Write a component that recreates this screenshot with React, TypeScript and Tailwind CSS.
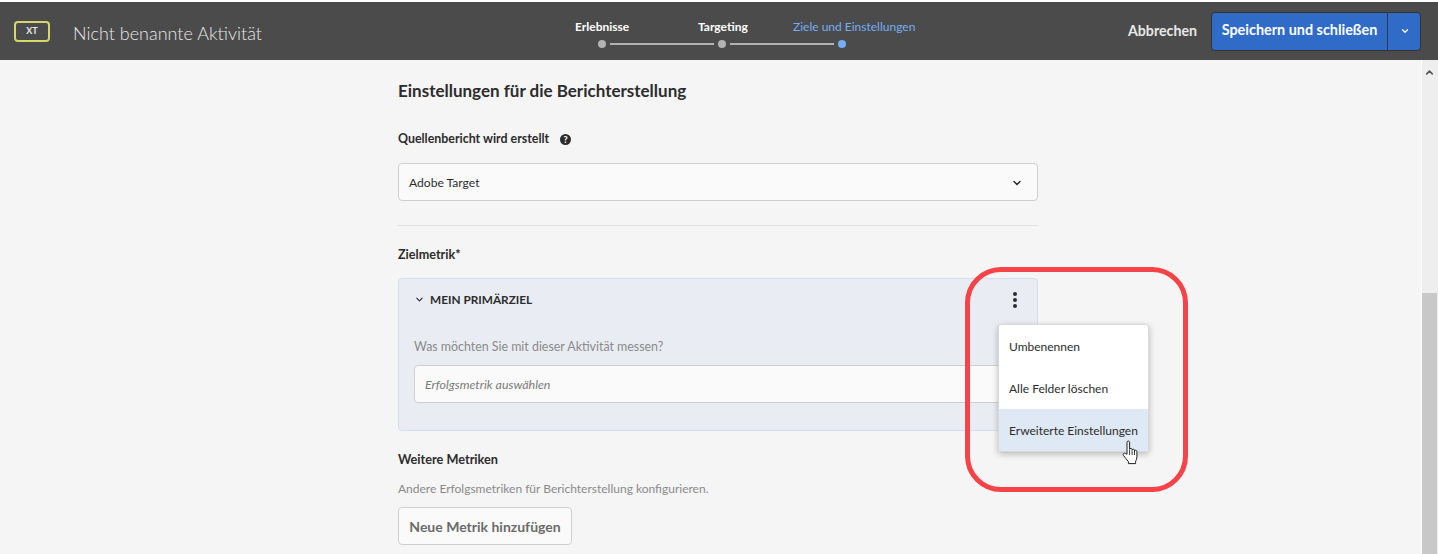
import { ChevronDown, ChevronUp } from "lucide-react";

const font = "font-['Lato','Noto_Sans',sans-serif]";

function Cursor() {
  return (
    <svg width="20" height="26" viewBox="0 0 20 26" className="absolute left-[1121px] top-[440px]">
      <path
        d="M6 2.2c0-1.6 2.6-1.6 2.6 0v7.2c0-1.3 2.5-1.3 2.5 0v.8c0-1.2 2.4-1.2 2.4 0v.9c0-1.1 2.4-1.1 2.4.2v5.5c0 2-.6 3.2-1.3 4.6v2.2H7.4v-2c-1.6-1.8-3.2-3.8-5-6.3-1-1.5 1-2.8 2.1-1.6L6 14.2z"
        fill="#fff"
        stroke="#222"
        strokeWidth="1"
        strokeLinejoin="round"
      />
      <path d="M8.6 10v5M11.1 10.5v4.5M13.5 11v4" stroke="#222" strokeWidth="0.9" fill="none" />
    </svg>
  );
}

export default function App() {
  return (
    <div className={`relative h-[554px] w-[1438px] overflow-hidden bg-[#f5f5f5] ${font}`}>
      {/* Top bar */}
      <div className="h-[2px] bg-white"></div>
      <header className="flex h-[58px] items-center bg-[#4b4b4b] pl-[14px] pr-[17px]">
        <div className="flex h-[21px] w-[36px] items-center justify-center rounded-[4px] border-2 border-[#d3d86c] text-[9px] font-bold text-[#e8e8e8]">
          XT
        </div>
        <div className="ml-[23px] w-[502px] pt-[4px] text-[18px] font-light text-[#e8e8e8]">Nicht benannte Aktivität</div>

        {/* Stepper */}
        <div className="flex w-[342px] flex-col gap-[5px] pt-[3px]">
          <div className="flex text-[12px] font-bold leading-[17px] text-white">
            <span className="w-[54px] whitespace-nowrap">Erlebnisse</span>
            <span className="ml-[69px] w-[49px] whitespace-nowrap">Targeting</span>
            <span className="ml-[46px] whitespace-nowrap font-normal text-[#75aef5]">Ziele und Einstellungen</span>
          </div>
          <div className="ml-[23px] flex items-center">
            <span className="h-[8px] w-[8px] rounded-full bg-[#b3b3b3]"></span>
            <span className="ml-[4px] h-[2px] w-[104px] bg-[#b3b3b3]"></span>
            <span className="ml-[4px] h-[8px] w-[8px] rounded-full bg-[#b3b3b3]"></span>
            <span className="ml-[4px] h-[2px] w-[104px] bg-[#b3b3b3]"></span>
            <span className="ml-[4px] h-[8px] w-[8px] rounded-full bg-[#75aef5]"></span>
          </div>
        </div>

        <div className="ml-auto flex items-center">
          <span className="mr-[14px] text-[14.2px] font-bold text-[#e8e8e8]">Abbrechen</span>
          <div className="flex h-[39px] w-[210px] rounded-[4px] border border-[#333] bg-[#2f6bc7] text-white">
            <div className="flex flex-1 items-center justify-center pb-[2px] text-[14.4px] font-bold">Speichern und schließen</div>
            <div className="flex w-[33px] items-center justify-center border-l border-[#2a3a55] pl-[1px]">
              <ChevronDown size={10} strokeWidth={3} />
            </div>
          </div>
        </div>
      </header>

      <div className="flex h-[494px]">
        {/* Form column */}
        <main className="ml-[398px] w-[640px] text-[#2c2c2c]">
          <h2 className="mt-[20px] text-[17px] font-bold leading-[22px]">Einstellungen für die Berichterstellung</h2>

          <div className="mt-[28px] flex h-[18px] items-center text-[12.4px] font-bold">
            Quellenbericht wird erstellt
            <span className="ml-[11px] flex h-[11px] w-[11px] items-center justify-center rounded-full bg-[#2c2c2c] text-[9px] font-black leading-none text-white">
              ?
            </span>
          </div>
          <div className="mt-[15px] flex h-[38px] items-center justify-between rounded-[4px] border border-[#d0d0d0] bg-[#fafafa] pl-[10px] pr-[14px] pt-[2px] text-[12.1px]">
            Adobe Target
            <ChevronDown size={12} strokeWidth={3} />
          </div>

          <div className="mt-[24px] h-px bg-[#e1e1e1]"></div>

          <div className="mt-[20px] h-[18px] text-[12.6px] font-bold leading-[18px]">Zielmetrik*</div>

          {/* Goal panel */}
          <section className="mt-[14px] h-[153px] rounded-[4px] border border-[#d3dfee] bg-[#e9edf3] px-[15px]">
            <div className="flex h-[41px] items-center justify-between">
              <div className="flex items-center gap-[5px] text-[11.8px] font-bold">
                <ChevronDown size={11} strokeWidth={2.5} />
                MEIN PRIMÄRZIEL
              </div>
              <div className="mr-[5px] flex flex-col gap-[2px]">
                <span className="h-[4px] w-[4px] rounded-full bg-[#2c2c2c]"></span>
                <span className="h-[4px] w-[4px] rounded-full bg-[#2c2c2c]"></span>
                <span className="h-[4px] w-[4px] rounded-full bg-[#2c2c2c]"></span>
              </div>
            </div>
            <div className="mt-[18px] h-[18px] text-[12.4px] leading-[18px] text-[#8a8a8a]">Was möchten Sie mit dieser Aktivität messen?</div>
            <div className="mt-[9px] flex h-[38px] items-center rounded-[4px] border border-[#d0d0d0] bg-[#fafafa] px-[10px] pt-[2px] text-[12.4px] italic text-[#7a7a7a]">
              Erfolgsmetrik auswählen
            </div>
          </section>

          <div className="mt-[19px] h-[18px] text-[12.7px] font-bold leading-[18px]">Weitere Metriken</div>
          <div className="mt-[12px] h-[18px] text-[12px] leading-[18px] text-[#8a8a8a]">Andere Erfolgsmetriken für Berichterstellung konfigurieren.</div>
          <button className="mt-[9px] flex h-[38px] w-[174px] items-center justify-center rounded-[4px] border border-[#d0d0d0] bg-[#fafafa] text-[14px] font-bold text-[#6a6a6a]">
            Neue Metrik hinzufügen
          </button>
        </main>

        {/* Scrollbar */}
        <div className="ml-[383px] flex h-full w-[17px] flex-col border-l border-white bg-[#eeeeee] pr-px">
          <div className="flex h-[233px] justify-center pt-[7px] text-[#555]">
            <ChevronUp size={11} strokeWidth={3.5} />
          </div>
          <div className="flex-1 bg-[#c8c8c8]"></div>
        </div>
      </div>

      {/* Open overflow menu */}
      <div className="absolute left-[998px] top-[324px] w-[151px] overflow-hidden rounded-[3px] border border-[#d8d8d8] bg-white text-[12px] text-[#2c2c2c] shadow-[0_2px_6px_rgba(0,0,0,0.25)]">
        <div className="flex h-[42px] items-center px-[10px] pt-[2px]">Umbenennen</div>
        <div className="flex h-[42px] items-center px-[10px] pt-[2px]">Alle Felder löschen</div>
        <div className="flex h-[42px] items-center whitespace-nowrap bg-[#dfe8f5] px-[10px] pt-[2px]">Erweiterte Einstellungen</div>
      </div>

      {/* Red callout */}
      <div className="pointer-events-none absolute left-[965px] top-[267px] h-[225px] w-[223px] rounded-[36px] border-[5px] border-[#f64348]"></div>
      <Cursor />
    </div>
  );
}
